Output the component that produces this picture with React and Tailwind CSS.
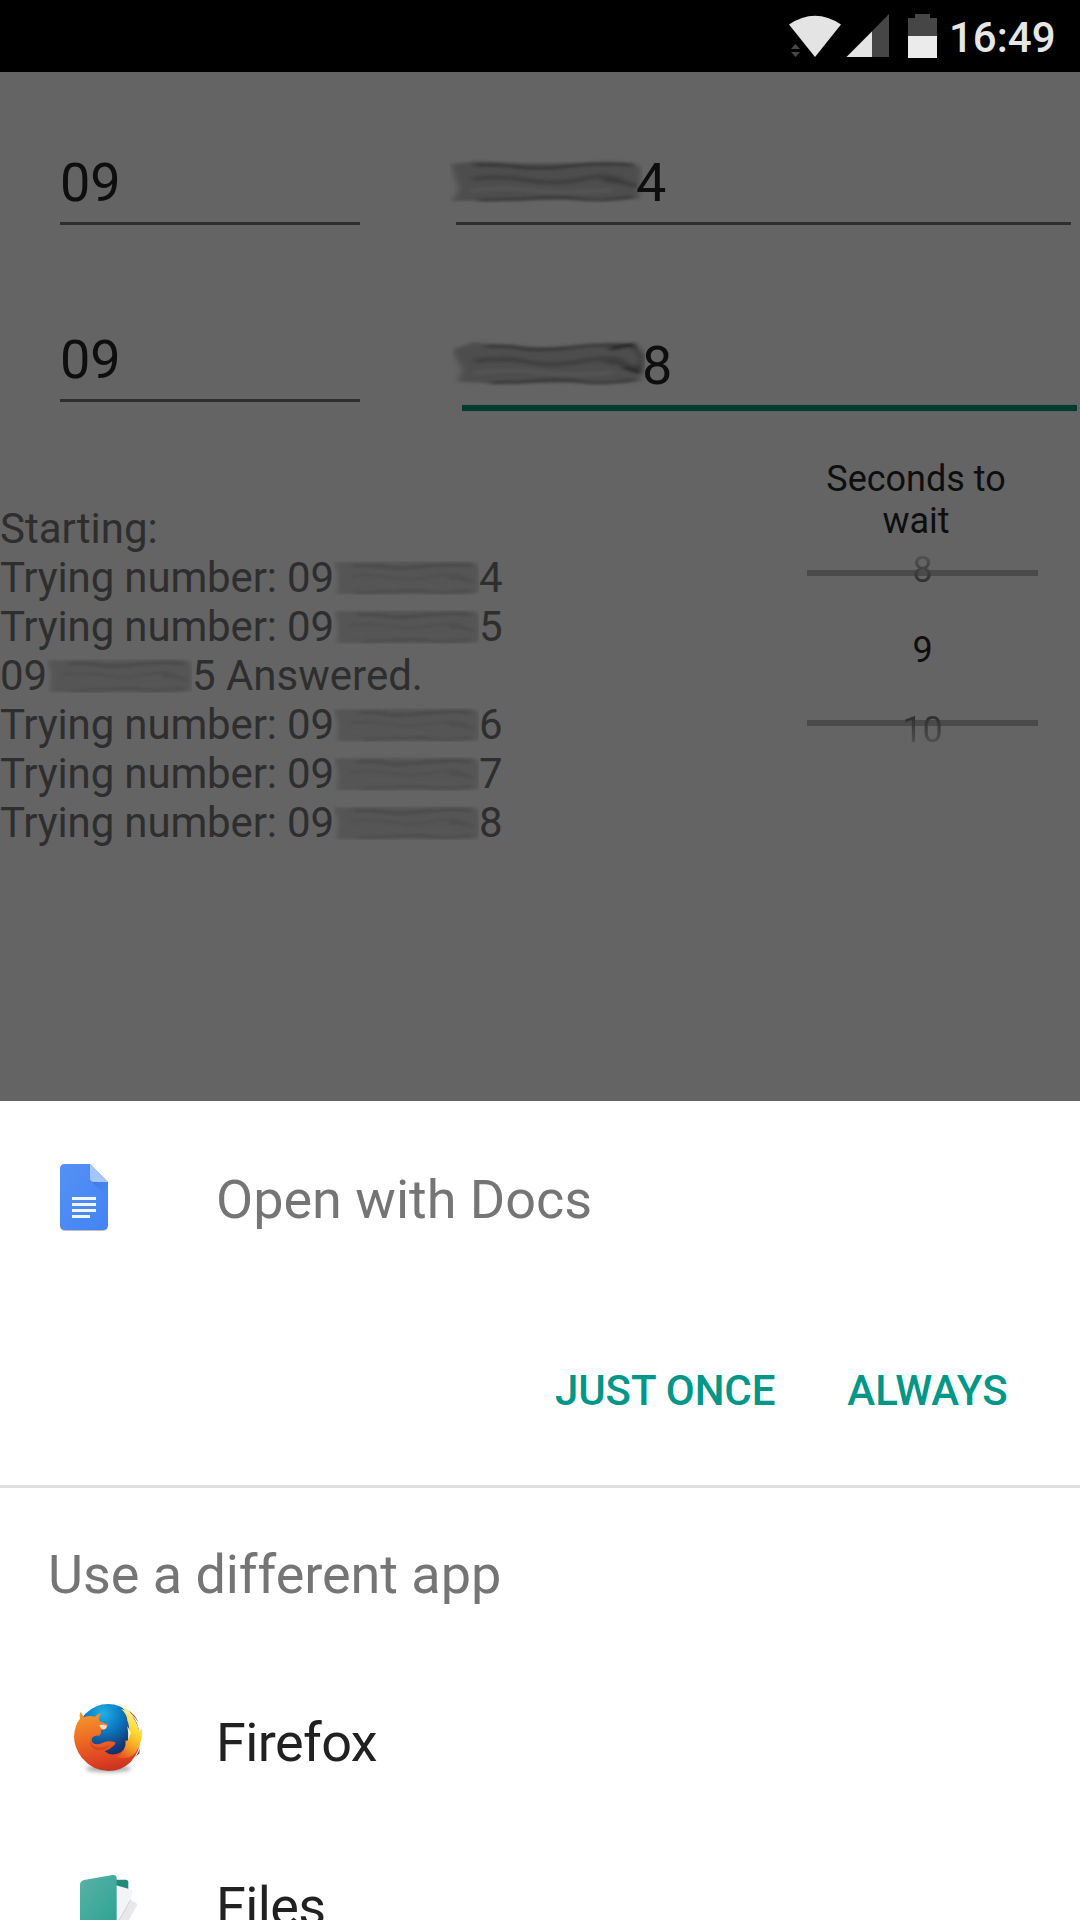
const DARK_SHAPES = [
  'M1 5 L28 2 L62 4 L180 4 L188 9 L186 40 L110 41 L2 42 L9 30 L4 16 Z',
  'M1 9 L22 2 L45 5 L120 8 L166 5 L180 4 L188 18 L186 40 L100 41 L50 42 L6 40 L10 28 L4 18 Z',
];

function Smudge({ className, kind = 0, dark }) {
  const id = `smear${kind}${dark ? 'd' : 'l'}`;
  const shift = (kind * 7) % 11;
  const c = dark
    ? ['#323232', '#383838', '#343434', '#343434']
    : ['#454545', '#4f4f4f', '#4b4b4b', '#4a4a4a'];
  return (
    <svg className={className} viewBox="0 0 190 44" preserveAspectRatio="none" fill="none">
      <defs>
        <filter id={id} x="-5%" y="-20%" width="110%" height="140%">
          <feGaussianBlur stdDeviation={dark ? '3 1.7' : '3.5 1.8'} />
        </filter>
      </defs>
      <g filter={`url(#${id})`}>
        <path
          d={dark ? DARK_SHAPES[kind ? 1 : 0] : 'M0 2 L100 1 L182 1 L190 6 L190 40 L182 43 L60 43 L4 43 L6 20 Z'}
          fill={dark ? '#4d4d4d' : '#545454'}
        />
        <path d={`M${24 + shift} 6 Q${48 + shift} 5 68 8 T118 7 T180 6`} stroke={c[0]} strokeWidth="3.5" strokeOpacity=".8" />
        <path d={`M22 20 Q${44 + shift} 16 75 21 T130 20 T170 22`} stroke={c[1]} strokeWidth="5" strokeOpacity=".55" />
        <path d="M150 21 Q168 22 184 27" stroke={c[2]} strokeWidth="4" strokeOpacity=".7" />
        {dark && kind > 0 && <path d="M155 9L178 4L187 16L185 31L168 26" stroke="#202020" strokeWidth="3" />}
        <path d={`M20 32 Q${48 + shift} 27 ${76 + shift} 31 T160 31`} stroke="#575757" strokeWidth="5" strokeOpacity=".5" />
        <path d={`M${28 + shift} 41 Q60 41 85 39 T128 40 T180 38`} stroke={c[3]} strokeWidth="3" strokeOpacity=".8" />
      </g>
    </svg>
  );
}

function StatusBar() {
  return (
    <header className="flex h-[72px] shrink-0 items-start bg-black pl-[789px] text-[#e6e6e6]">
      <svg className="mt-3.5 h-11 w-[149px] shrink-0" viewBox="789 14 149 44">
        <path d="M789 24.5Q815 7 841 24.5L815 57Z" fill="#e4e4e4" />
        <path d="M795.500 44l4.500 5h-9zM795.500 57l4.500-5h-9z" fill="#484848" />
        <path d="M846.500 57L889 14v43Z" fill="#464646" />
        <path d="M846.500 57L872 31.500V57Z" fill="#e4e4e4" />
        <path d="M908 18h7v-4h15v4h7v18h-29z" fill="#464646" />
        <path d="M908 36h29v22h-29z" fill="#ebebeb" />
      </svg>
      <span className="ml-[11px] mt-[13px] text-[42px] font-medium leading-[49px]">16:49</span>
    </header>
  );
}

function Prefix() {
  return <div className="h-[75px] w-[300px] border-b-[3px] border-[#2e2e2e] pt-px text-[54px] leading-[63px] text-[#0e0e0e]">09</div>;
}

function Log() {
  const rows = [
    ['Trying number: 09', '4'],
    ['Trying number: 09', '5'],
    ['09', '5 Answered.'],
    ['Trying number: 09', '6'],
    ['Trying number: 09', '7'],
    ['Trying number: 09', '8'],
  ];
  return (
    <div className="w-[700px] pt-[55px] text-[42px] leading-[49px] text-[#2e2e2e]">
      <div>Starting:</div>
      {rows.map(([a, b], i) => (
        <div key={i} className="flex whitespace-pre">
          <span className="tracking-[-0.15px]">{a}</span>
          <Smudge kind={i} className="mt-2 h-[34px] w-[145px]" />
          <span>{b}</span>
        </div>
      ))}
    </div>
  );
}

function Picker() {
  return (
    <div className="ml-[107px] w-[231px] text-center text-[36px] leading-[42px] text-[#0e0e0e]">
      <p className="w-[218px] pt-[9px]">Seconds to<br />wait</p>
      <div className="relative mt-[28px] h-[156px] border-y-[6px] border-[#4a4a4a]">
        <span className="absolute inset-x-0 -top-[27px] bg-linear-to-b from-[#505050] from-20% to-[#303030] to-80% bg-clip-text text-transparent">8</span>
        <span className="absolute inset-x-0 top-[53px]">9</span>
        <span className="absolute inset-x-0 top-[133px] bg-linear-to-b from-[#303030] from-20% to-[#505050] to-80% bg-clip-text text-transparent">10</span>
      </div>
    </div>
  );
}

function DocsIcon() {
  return (
    <svg className="h-[72px] w-[54px]" viewBox="57 1161 54 72">
      <defs>
        <linearGradient id="doc" x1="0" y1="0" x2="1" y2="1"><stop stopColor="#5491f5" /><stop offset="1" stopColor="#4384f3" /></linearGradient>
        <linearGradient id="docshade" x1="0" y1="0" x2="1" y2="1"><stop stopColor="#2f68cf" stopOpacity=".6" /><stop offset="1" stopColor="#4285f4" stopOpacity="0" /></linearGradient>
      </defs>
      <rect x="60" y="1183" width="48" height="48" rx="5" fill="#000" fillOpacity=".25" />
      <path d="M65 1164H90L108 1182V1225Q108 1230 103 1230H65Q60 1230 60 1225V1169Q60 1164 65 1164Z" fill="url(#doc)" />
      <path d="M91 1181L108 1198V1182Z" fill="url(#docshade)" />
      <path d="M90 1164L108 1182H94Q90 1182 90 1178Z" fill="#a6c5fa" />
      <path d="M72 1197h24v3H72zM72 1203h24v3H72zM72 1209h24v3H72zM72 1215h18v3H72z" fill="#f1f5fd" />
    </svg>
  );
}

function FirefoxIcon() {
  return (
    <svg className="h-[76px] w-[76px]" viewBox="30 30 228 228">
      <defs>
        <radialGradient id="globe" cx=".42" cy=".15" r=".75"><stop stopColor="#1fb0e6" /><stop offset=".4" stopColor="#0b78c0" /><stop offset=".75" stopColor="#163c7c" /><stop offset="1" stopColor="#15275c" /></radialGradient>
        <linearGradient id="fox" x1=".2" y1="0" x2=".4" y2="1"><stop stopColor="#f39a2b" /><stop offset=".45" stopColor="#ee6a24" /><stop offset=".85" stopColor="#dc4022" /><stop offset="1" stopColor="#c9341f" /></linearGradient>
        <linearGradient id="tail" x1=".7" y1="0" x2=".35" y2="1"><stop stopColor="#fff3a0" /><stop offset=".4" stopColor="#fddc35" /><stop offset=".7" stopColor="#f8a626" /><stop offset="1" stopColor="#e65f22" /></linearGradient>
        <filter id="soft" x="-20%" y="-100%" width="140%" height="300%"><feGaussianBlur stdDeviation="6" /></filter>
      </defs>
      <ellipse cx="145" cy="236" rx="68" ry="10" fill="#000" opacity=".35" filter="url(#soft)" />
      <circle cx="144" cy="136" r="94" fill="url(#globe)" />
      <path d="M62 65L72 82Q88 75 104 80Q112 72 124 70Q116 80 118 94L142 102Q144 110 136 117L122 121Q126 130 118 137Q106 134 98 142Q92 150 98 158Q110 168 128 158Q142 150 164 156Q170 160 160 168Q148 180 134 184Q152 200 180 188Q202 174 208 138L240 140Q244 180 212 216Q184 243 146 243Q98 242 66 204Q42 172 42 140Q44 104 60 86Q56 76 62 65Z" fill="url(#fox)" />
      <path d="M183 56Q226 72 238 124Q246 118 245 110Q252 152 226 188Q206 212 170 200Q200 184 197 150Q204 158 205 142Q213 138 208 120Q206 98 202 92Q202 74 183 56Z" fill="url(#tail)" />
      <path d="M186 51Q214 58 234 94Q218 78 202 72Z" fill="#ffeb9a" />
      <path d="M206 62Q226 74 236 98L226 84Z" fill="#a8462a" />
      <path d="M202 108L213 128L204 150Q206 128 202 108Z" fill="#fff6c8" />
      <path d="M240 176L238 190L228 200Z" fill="#8a3026" />
      <path d="M118 106Q128 102 142 107L136 117Q124 122 118 106Z" fill="#f8dcc6" />
      <path d="M92 146Q90 168 116 172Q134 174 150 166Q128 188 102 177Q86 168 92 146Z" fill="#c03a22" opacity=".5" />
    </svg>
  );
}

function FilesIcon() {
  return (
    <svg className="h-[46px] w-[60px]" viewBox="0 0 180 138">
      <defs>
        <linearGradient id="folder" x1="0" y1="0" x2="1" y2="1"><stop stopColor="#5ab2a5" /><stop offset="1" stopColor="#2ea494" /></linearGradient>
      </defs>
      <path d="M102 14h35q8 0 8 8v116h-43z" fill="#23897b" />
      <path d="M108 31L158 45L140 138H108Z" fill="#f3f4f5" />
      <path d="M152 74L173 88L145 138H115Z" fill="#e8e8ea" />
      <path d="M152 74L116 138" stroke="#c6c7c8" strokeWidth="2" />
      <path d="M0 29Q0 18 12 15L98 0Q110-1 110 10V138H0Z" fill="url(#folder)" />
    </svg>
  );
}

export default function App() {
  return (
    <div className="flex h-[1920px] w-[1080px] flex-col overflow-hidden bg-[#646464] font-[Roboto,sans-serif]">
      <StatusBar />
      <main className="h-[1029px] shrink-0">
        <section className="flex h-[177px] pl-[60px] pt-[78px]">
          <Prefix />
          <div className="ml-[96px] flex h-[75px] w-[615px] border-b-[3px] border-[#2e2e2e] pt-px text-[54px] leading-[63px] text-[#0e0e0e]">
            <Smudge dark kind={0} className="-ml-1.5 mt-[8px] h-[44px] w-[193px]" />
            <span className="-ml-[7px]">4</span>
          </div>
        </section>
        <section className="flex h-[200px] pl-[60px] pt-[78px]">
          <Prefix />
          <div className="ml-[102px] mt-1.5 flex h-[78px] w-[615px] border-b-[6px] border-[#003c36] pt-px text-[54px] leading-[63px] text-[#0e0e0e]">
            <Smudge dark kind={3} className="-ml-2.5 mt-[6px] h-[46px] w-[193px]" />
            <span className="-ml-[3px]">8</span>
          </div>
        </section>
        <section className="flex">
          <Log />
          <Picker />
        </section>
      </main>
      <section className="h-[387px] shrink-0 border-b-[3px] border-[#e0e0e0] bg-white">
        <div className="flex h-[200px] pl-[57px] pt-[60px]">
          <DocsIcon />
          <h1 className="ml-[105px] mt-[7px] text-[54px] leading-[63px] text-[#757575]">Open with Docs</h1>
        </div>
        <div className="flex gap-[72px] pl-[555px] pt-[65px] text-[42px] font-medium leading-[49px] text-[#009688]">
          <button className="tracking-[-0.1px]">JUST ONCE</button>
          <button>ALWAYS</button>
        </div>
      </section>
      <section className="grow bg-white">
        <h2 className="h-[212px] pl-[48px] pt-[55px] text-[54px] leading-[63px] tracking-[-0.05px] text-[#757575]">Use a different app</h2>
        <div className="flex h-[175px] pl-[70px]">
          <FirefoxIcon />
          <span className="ml-[70px] mt-[11px] text-[54px] leading-[63px] tracking-[-0.6px] text-[#212121]">Firefox</span>
        </div>
        <div className="flex h-[45px] pl-[80px]">
          <FilesIcon />
          <span className="ml-[76px] text-[54px] leading-[63px] tracking-[-0.6px] text-[#212121]">Files</span>
        </div>
      </section>
    </div>
  );
}
